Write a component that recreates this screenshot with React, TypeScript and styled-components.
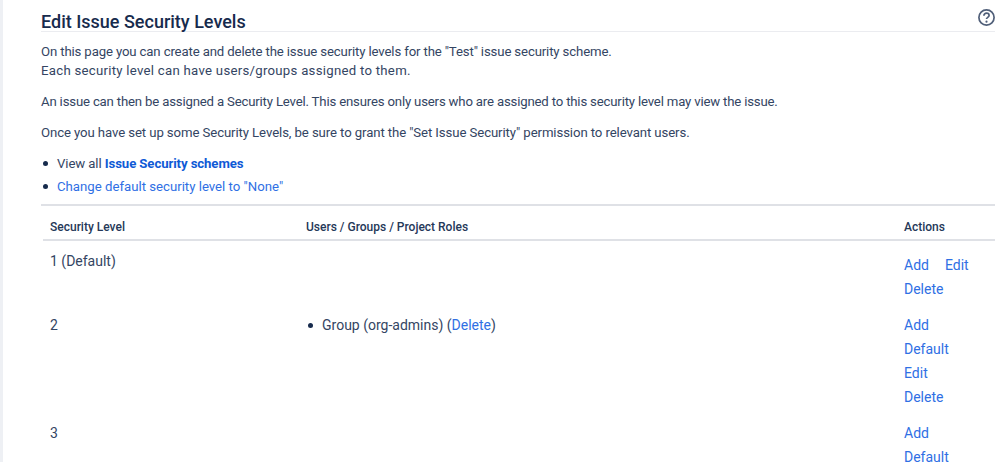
import React from "react";
import styled, { createGlobalStyle } from "styled-components";

const GlobalStyle = createGlobalStyle`
  html, body {
    margin: 0;
    height: 462px;
    overflow: hidden;
    background: #fff;
  }
  body {
    font-family: Roboto, "Noto Sans", sans-serif;
    font-size: 13.2px;
    letter-spacing: -0.1px;
    line-height: 19px;
    color: #344563;
  }
`;

const Page = styled.div`
  border-left: 3px solid #eef0f4;
  padding: 9px 4px 0 38px;
  height: 462px;
  box-sizing: border-box;
  overflow: hidden;
`;

const Header = styled.header`
  display: flex;
  justify-content: space-between;
  align-items: flex-start;
  border-bottom: 1px solid #ebecf0;
  height: 22px;
  margin-bottom: 10px;
`;

const Title = styled.h1`
  margin: 0;
  font-size: 18px;
  font-weight: 500;
  letter-spacing: 0;
  line-height: 25px;
  color: #172b4d;
`;

const HelpIcon = styled.svg`
  width: 17px;
  height: 17px;
  color: #505f79;
`;

const Paragraph = styled.p`
  margin: 0 0 12px;
`;

const Tracked = styled.span<{ $tracking: number }>`
  letter-spacing: ${(p) => p.$tracking}px;
`;

const Links = styled.ul`
  margin: 0;
  padding: 0 0 0 16px;
  list-style: none;
`;

const LinkItem = styled.li`
  position: relative;
  height: 23px;
  &::before {
    content: "";
    position: absolute;
    left: -14px;
    top: 7px;
    width: 5px;
    height: 5px;
    border-radius: 50%;
    background: #172b4d;
  }
`;

const Link = styled.a<{ $strong?: boolean }>`
  color: ${(p) => (p.$strong ? "#0f5ad6" : "#2f6fe4")};
  text-decoration: none;
  font-weight: ${(p) => (p.$strong ? 700 : 400)};
  letter-spacing: ${(p) => (p.$strong ? -0.1 : 0)}px;
`;

const TableFrame = styled.div`
  margin-top: 4px;
  padding-left: 2px;
  border-top: 2px solid #dfe1e6;
`;

const Table = styled.table`
  width: 100%;
  table-layout: fixed;
  border-collapse: separate;
  border-spacing: 0;
`;

const HeadCell = styled.th<{ $width: number }>`
  width: ${(p) => p.$width}px;
  padding: 12px 7px 2px;
  text-align: left;
  font-size: 12px;
  font-weight: 500;
  letter-spacing: 0;
  color: #253858;
  border-bottom: 2px solid #dfe1e6;
`;

const Cell = styled.td`
  padding: 11px 7px 6px;
  vertical-align: top;
  font-size: 14px;
  letter-spacing: 0;
`;

const Actions = styled.div<{ $offset: number }>`
  display: flex;
  flex-direction: column;
  row-gap: 5px;
  margin-top: ${(p) => p.$offset}px;
`;

const ActionLine = styled.div`
  display: flex;
  column-gap: 16px;
`;

const Members = styled.ul`
  margin: 0;
  padding: 0 0 0 16px;
  list-style: none;
`;

const rows = [
  { level: "1", isDefault: true, actions: [["Add", "Edit"], ["Delete"]], members: false },
  { level: "2", isDefault: false, actions: [["Add"], ["Default"], ["Edit"], ["Delete"]], members: true },
  { level: "3", isDefault: false, actions: [["Add"], ["Default"], ["Edit"], ["Delete"]], members: false },
];

export default function App() {
  return (
    <>
      <GlobalStyle />
      <Page>
        <Header>
          <Title>Edit Issue Security Levels</Title>
          <HelpIcon viewBox="0 0 17 17" fill="none">
            <circle cx="8.5" cy="8.5" r="7.6" stroke="currentColor" strokeWidth="1.7" />
            <path
              d="M5.9 6.7c0-1.5 1.2-2.5 2.6-2.5s2.6.9 2.6 2.3c0 1.9-2.6 1.9-2.6 3.6"
              stroke="currentColor"
              strokeWidth="1.7"
            />
            <circle cx="8.5" cy="12.7" r="1.1" fill="currentColor" />
          </HelpIcon>
        </Header>
        <Paragraph>
          <Tracked $tracking={-0.14}>
            On this page you can create and delete the issue security levels for the "Test" issue security scheme.
          </Tracked>
          <br />
          <Tracked $tracking={0.27}>
            Each security level can have users/groups assigned to them.
          </Tracked>
        </Paragraph>
        <Paragraph>
          <Tracked $tracking={-0.18}>
            An issue can then be assigned a Security Level. This ensures only users who are assigned to this security level may view the issue.
          </Tracked>
        </Paragraph>
        <Paragraph>
          Once you have set up some Security Levels, be sure to grant the "Set Issue Security" permission to relevant users.
        </Paragraph>
        <Links>
          <LinkItem>
            View all <Link $strong href="#">Issue Security schemes</Link>
          </LinkItem>
          <LinkItem>
            <Link href="#">Change default security level to "None"</Link>
          </LinkItem>
        </Links>
        <TableFrame>
          <Table>
            <thead>
              <tr>
                <HeadCell $width={242}>Security Level</HeadCell>
                <HeadCell $width={584}>Users / Groups / Project Roles</HeadCell>
                <HeadCell $width={84}>Actions</HeadCell>
              </tr>
            </thead>
            <tbody>
              {rows.map((row) => (
                <tr key={row.level}>
                  <Cell>
                    {row.level}
                    {row.isDefault && " (Default)"}
                  </Cell>
                  <Cell>
                    {row.members && (
                      <Members>
                        <LinkItem>
                          Group (org-admins) (<Link href="#">Delete</Link>)
                        </LinkItem>
                      </Members>
                    )}
                  </Cell>
                  <Cell>
                    <Actions $offset={row.isDefault ? 4 : 0}>
                      {row.actions.map((line) => (
                        <ActionLine key={line.join()}>
                          {line.map((a) => (
                            <Link key={a} href="#">{a}</Link>
                          ))}
                        </ActionLine>
                      ))}
                    </Actions>
                  </Cell>
                </tr>
              ))}
            </tbody>
          </Table>
        </TableFrame>
      </Page>
    </>
  );
}
